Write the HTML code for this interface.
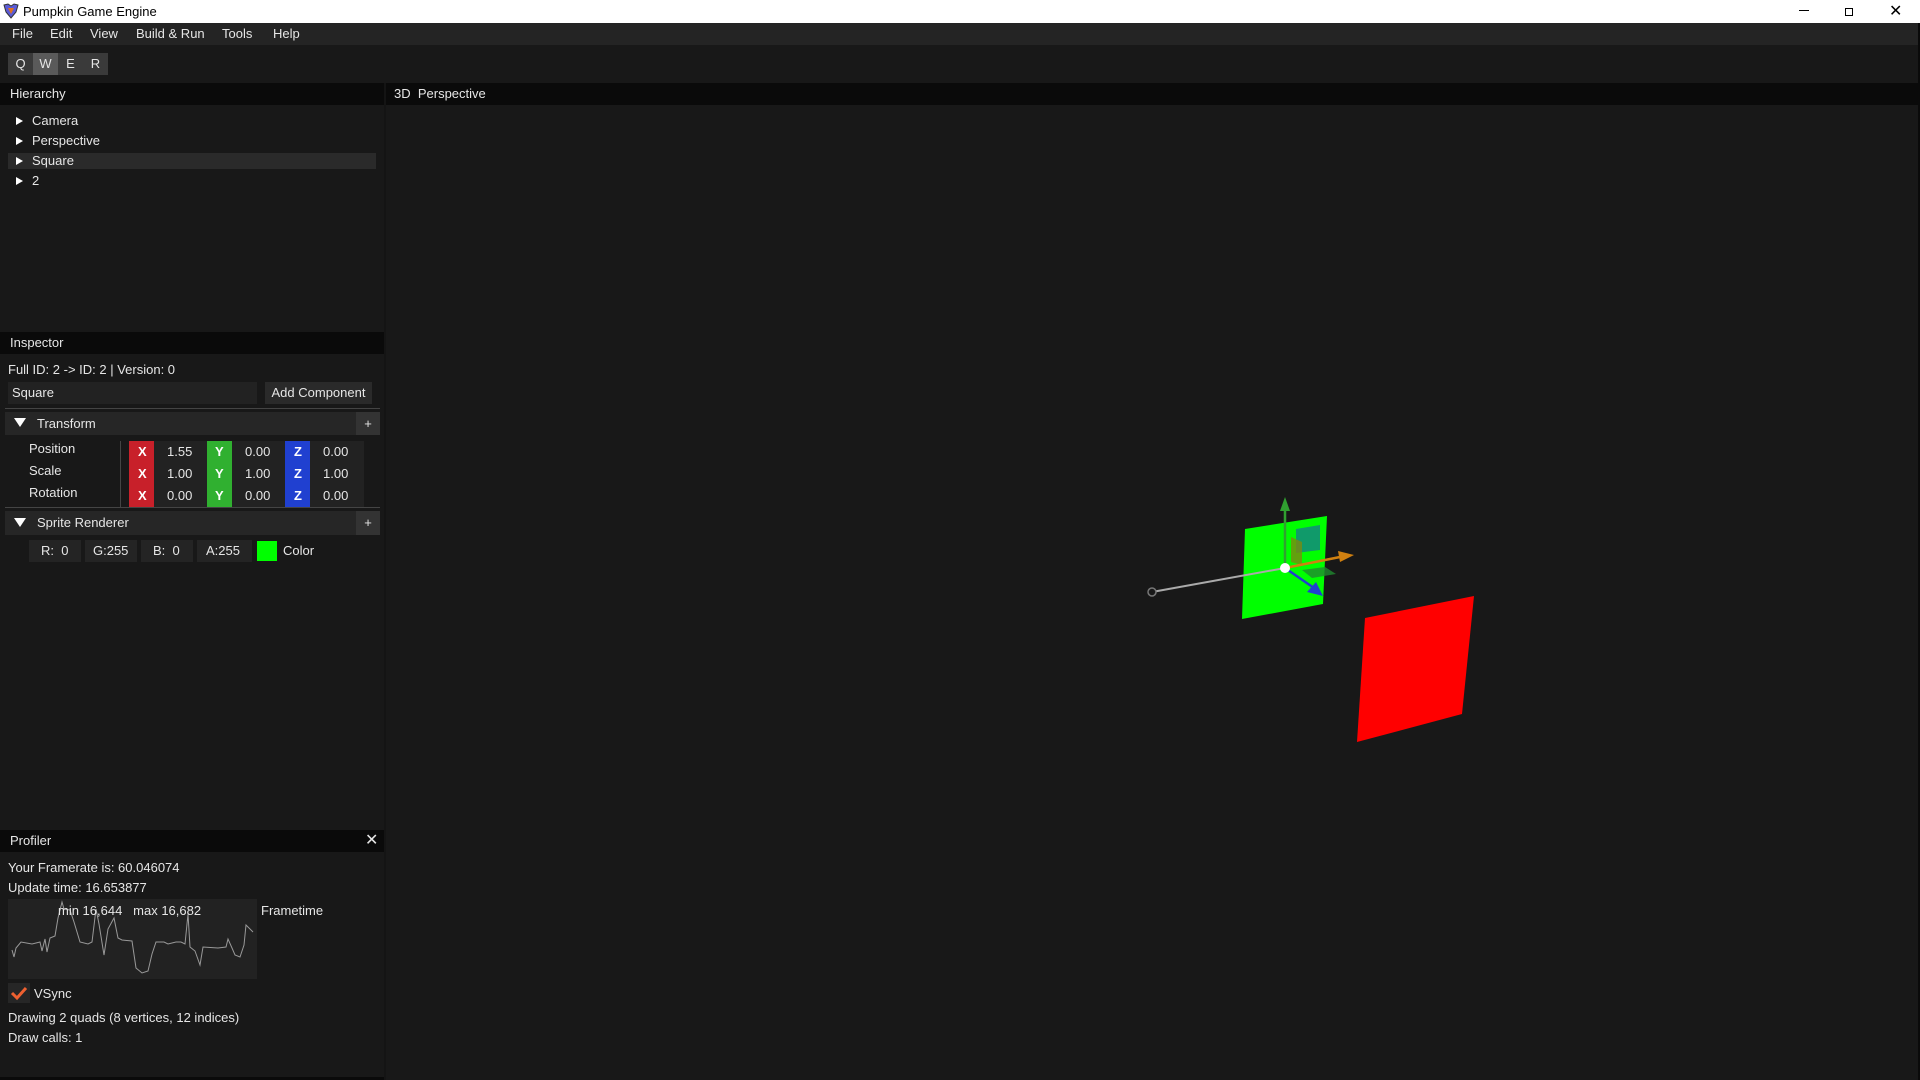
<!DOCTYPE html>
<html><head><meta charset="utf-8"><style>
*{margin:0;padding:0;box-sizing:border-box}
body{width:1920px;height:1080px;background:#181818;font-family:"Liberation Sans",sans-serif;font-size:13px;color:#e6e6e6;position:relative;overflow:hidden}
.a{position:absolute;white-space:nowrap}
.hdr{background:#0a0a0a;height:22px;line-height:22px;padding-left:10px}
.tri{position:absolute;width:0;height:0;border-left:7px solid #fff;border-top:4px solid transparent;border-bottom:4px solid transparent}
.btn{background:#2a2a2a;text-align:center}
.ax{color:#fff;font-weight:bold;text-align:center;height:24px;line-height:24px;width:25px}
.val{background:#222;text-align:center;height:24px;line-height:24px}
</style></head><body>
<div class="a" style="left:0;top:0;width:1920px;height:23px;background:#fff;color:#000;line-height:23px;font-size:13px">
 <svg class="a" style="left:3px;top:3px" width="16" height="16" viewBox="0 0 16 16"><path d="M1 2 L5 1 L8 3 L11 1 L15 2 L13 9 L8 15 L3 9 Z" fill="#5b5bd6" stroke="#333" stroke-width="1"/><path d="M5 5 L11 5 L8 11 Z" fill="#e07020"/></svg>
 <span class="a" style="left:23px;top:0">Pumpkin Game Engine</span>
 <div class="a" style="left:1799px;top:10px;width:10px;height:1px;background:#000"></div>
 <div class="a" style="left:1845px;top:8px;width:8px;height:8px;border:1px solid #000;background:#fff"></div>
 <div class="a" style="left:1843px;top:6px;width:8px;height:8px;border-left:1px solid #000;border-bottom:1px solid #000;display:none"></div>
 <span class="a" style="left:1889px;top:0;font-size:16px">✕</span>
</div>
<div class="a" style="left:0;top:23px;width:1918px;height:22px;background:#242424;line-height:22px">
 <span class="a" style="left:12px">File</span><span class="a" style="left:50px">Edit</span><span class="a" style="left:90px">View</span><span class="a" style="left:136px">Build &amp; Run</span><span class="a" style="left:222px">Tools</span><span class="a" style="left:273px">Help</span>
</div>
<div class="a" style="left:8px;top:53px;height:22px;width:100px;background:#3a3a3a;line-height:22px;font-size:13px">
 <span class="a" style="left:0;width:25px;text-align:center">Q</span>
 <span class="a" style="left:25px;width:25px;text-align:center;background:#5a5a5a;height:22px">W</span>
 <span class="a" style="left:50px;width:25px;text-align:center">E</span>
 <span class="a" style="left:75px;width:25px;text-align:center">R</span>
</div>
<!-- left panel -->
<div class="a hdr" style="left:0;top:83px;width:384px">Hierarchy</div>
<div class="a" style="left:384px;top:83px;width:2px;height:997px;background:#141414"></div>
<div class="a" style="left:8px;top:153px;width:368px;height:16px;background:#2a2a2a"></div>
<div class="tri" style="left:16px;top:117px"></div><span class="a" style="left:32px;top:113px">Camera</span>
<div class="tri" style="left:16px;top:137px"></div><span class="a" style="left:32px;top:133px">Perspective</span>
<div class="tri" style="left:16px;top:157px"></div><span class="a" style="left:32px;top:153px">Square</span>
<div class="tri" style="left:16px;top:177px"></div><span class="a" style="left:32px;top:173px">2</span>
<div class="a hdr" style="left:0;top:332px;width:384px">Inspector</div>
<span class="a" style="left:8px;top:362px">Full ID: 2 -&gt; ID: 2 | Version: 0</span>
<div class="a" style="left:8px;top:382px;width:249px;height:22px;background:#222;line-height:22px;padding-left:4px">Square</div>
<div class="a btn" style="left:265px;top:382px;width:107px;height:22px;line-height:22px">Add Component</div>
<div class="a" style="left:5px;top:408px;width:375px;height:1px;background:#444"></div>
<div class="a" style="left:5px;top:412px;width:375px;height:23px;background:#262626;line-height:23px"><span class="a" style="left:32px">Transform</span></div>
<div class="a" style="left:14px;top:418px;border-top:9px solid #fff;border-left:6px solid transparent;border-right:6px solid transparent;width:0;height:0"></div>
<div class="a btn" style="left:356px;top:412px;width:24px;height:23px;line-height:23px;background:#333">+</div>
<span class="a" style="left:29px;top:441px">Position</span><span class="a" style="left:29px;top:463px">Scale</span><span class="a" style="left:29px;top:485px">Rotation</span>
<div class="a" style="left:120px;top:441px;width:1px;height:66px;background:#444"></div>
<div class="a" style="left:129px;top:441px;width:235px;height:66px;background:#222"></div>
<div class="a" style="left:129px;top:441px;line-height:22px">
 <div class="a" style="left:0;top:0;width:25px;height:66px;background:#c8202a"></div>
 <div class="a" style="left:78px;top:0;width:25px;height:66px;background:#30b030"></div>
 <div class="a" style="left:156px;top:0;width:25px;height:66px;background:#2040d0"></div>
 <div class="a" style="top:0"><b class="a" style="left:9px;top:0;color:#fff">X</b><b class="a" style="left:86px;color:#fff">Y</b><b class="a" style="left:165px;color:#fff">Z</b><span class="a" style="left:38px">1.55</span><span class="a" style="left:116px">0.00</span><span class="a" style="left:194px">0.00</span></div>
 <div class="a" style="top:22px"><b class="a" style="left:9px;color:#fff">X</b><b class="a" style="left:86px;color:#fff">Y</b><b class="a" style="left:165px;color:#fff">Z</b><span class="a" style="left:38px">1.00</span><span class="a" style="left:116px">1.00</span><span class="a" style="left:194px">1.00</span></div>
 <div class="a" style="top:44px"><b class="a" style="left:9px;color:#fff">X</b><b class="a" style="left:86px;color:#fff">Y</b><b class="a" style="left:165px;color:#fff">Z</b><span class="a" style="left:38px">0.00</span><span class="a" style="left:116px">0.00</span><span class="a" style="left:194px">0.00</span></div>
</div>
<div class="a" style="left:5px;top:507px;width:375px;height:1px;background:#444"></div>
<div class="a" style="left:5px;top:511px;width:375px;height:24px;background:#262626;line-height:24px"><span class="a" style="left:32px">Sprite Renderer</span></div>
<div class="a" style="left:14px;top:518px;border-top:9px solid #fff;border-left:6px solid transparent;border-right:6px solid transparent;width:0;height:0"></div>
<div class="a btn" style="left:356px;top:511px;width:24px;height:24px;line-height:24px;background:#333">+</div>
<div class="a" style="left:29px;top:540px;width:52px;height:22px;background:#242424;line-height:22px;padding-left:12px">R:&nbsp; 0</div>
<div class="a" style="left:85px;top:540px;width:52px;height:22px;background:#242424;line-height:22px;padding-left:8px">G:255</div>
<div class="a" style="left:141px;top:540px;width:52px;height:22px;background:#242424;line-height:22px;padding-left:12px">B:&nbsp; 0</div>
<div class="a" style="left:197px;top:540px;width:55px;height:22px;background:#242424;line-height:22px;padding-left:9px">A:255</div>
<div class="a" style="left:257px;top:541px;width:20px;height:20px;background:#00ff00"></div>
<span class="a" style="left:283px;top:543px">Color</span>
<div class="a hdr" style="left:0;top:830px;width:384px">Profiler</div>
<span class="a" style="left:365px;top:830px;font-size:16px;line-height:22px">✕</span>
<span class="a" style="left:8px;top:860px">Your Framerate is: 60.046074</span>
<span class="a" style="left:8px;top:880px">Update time: 16.653877</span>
<div class="a" style="left:8px;top:899px;width:249px;height:80px;background:#222"></div>
<svg class="a" style="left:0;top:820px" width="260" height="160" viewBox="0 0 1200/3 0" ><polyline fill="none" stroke="#999" stroke-width="1" points="12,130 14,137 16,128 21,122 32,124 40,122 42,131 45,119 47,132 50,118 55,116 58,98 62,82 64,89 70,90 74,102 80,122 88,124 92,122 96,89 99,104 104,135 108,109 114,98 118,118 122,120 132,121 136,148 142,153 148,151 152,134 156,122 164,122 168,124 176,122 181,122 185,124 188,94 190,127 195,131 200,145 203,127 218,128 226,127 228,119 232,128 235,135 240,137 244,125 246,105 253,112"/></svg>
<span class="a" style="left:58px;top:903px">min 16,644&nbsp;&nbsp; max 16,682</span>
<span class="a" style="left:261px;top:903px">Frametime</span>
<div class="a" style="left:8px;top:983px;width:22px;height:20px;background:#262626"></div>
<svg class="a" style="left:10px;top:985px" width="18" height="16"><polyline points="2,8 7,13 16,3" fill="none" stroke="#ee6030" stroke-width="3"/></svg>
<span class="a" style="left:34px;top:986px">VSync</span>
<span class="a" style="left:8px;top:1010px">Drawing 2 quads (8 vertices, 12 indices)</span>
<span class="a" style="left:8px;top:1030px">Draw calls: 1</span>
<div class="a" style="left:0;top:1077px;width:384px;height:3px;background:#0a0a0a"></div>
<!-- viewport -->
<div class="a hdr" style="left:386px;top:83px;width:1532px;padding-left:8px;height:22px">3D&nbsp; Perspective</div>
<div class="a" style="left:1918px;top:23px;width:2px;height:1057px;background:#0a0a0a"></div>
<svg class="a" style="left:0;top:0" width="1920" height="1080">
 <polygon points="1245,529 1327,516 1323,604 1242,619" fill="#00ff00"/>
 <polygon points="1365,618 1474,596 1462,714 1357,742" fill="#ff0000"/>
 <polygon points="1296,529 1320,525 1320,550 1296,553" fill="#109a6a"/>
 <polygon points="1291,537 1302,542 1302,565 1291,562" fill="#7a8a10" opacity=".8"/>
 <polygon points="1302,570 1325,567 1336,574 1312,578" fill="#208a30" opacity=".8"/>
 <line x1="1152" y1="592" x2="1285" y2="568" stroke="#aaa" stroke-width="2"/>
 <circle cx="1152" cy="592" r="4" fill="#181818" stroke="#777" stroke-width="1.5"/>
 <line x1="1285" y1="568" x2="1285" y2="508" stroke="#30a030" stroke-width="2.5"/>
 <polygon points="1285,497 1280,511 1290,511" fill="#30a030"/>
 <line x1="1285" y1="568" x2="1340" y2="557" stroke="#d08010" stroke-width="2.5"/>
 <polygon points="1354,555 1338,551 1340,562" fill="#d08010"/>
 <line x1="1285" y1="568" x2="1314" y2="588" stroke="#2040d0" stroke-width="2.5"/>
 <polygon points="1323,596 1307,592 1316,582" fill="#2040d0"/>
 <circle cx="1285" cy="568" r="5" fill="#fff"/>
</svg>
</body></html>
